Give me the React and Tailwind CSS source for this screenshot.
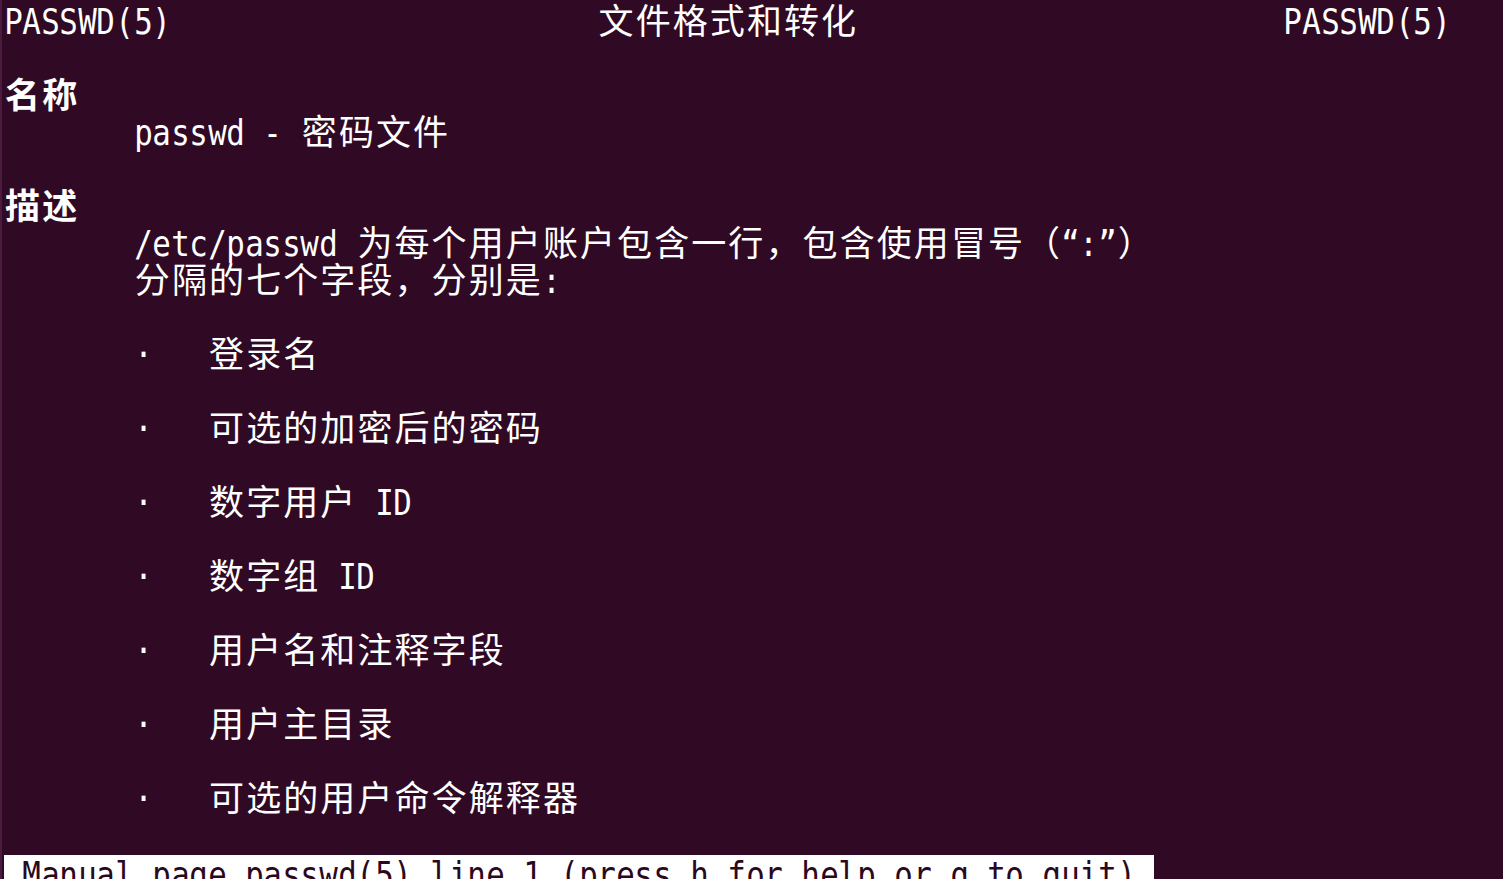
const LATIN_FONT = "font-['DejaVu_Sans_Mono',monospace]"
const CJK_FONT = "font-['Noto_Sans_CJK_SC',sans-serif]"

const isWide = (ch) => {
  const c = ch.codePointAt(0)
  return (c >= 0x2e80 && c <= 0x9fff) || (c >= 0x3000 && c <= 0x303f) || (c >= 0xff00 && c <= 0xff60)
}

const pad = (n) => ' '.repeat(n)

// one entry per terminal row, 37px each, ~18.55px per cell
const LINES = [
  { text: 'PASSWD(5)' + pad(23) + '文件格式和转化' + pad(23) + 'PASSWD(5)' },
  { text: '' },
  { text: '名称', bold: true },
  { text: pad(7) + 'passwd - 密码文件' },
  { text: '' },
  { text: '描述', bold: true },
  { text: pad(7) + '/etc/passwd 为每个用户账户包含一行，包含使用冒号（“:”）' },
  { text: pad(7) + '分隔的七个字段，分别是:' },
  { text: '' },
  { text: pad(7) + '·   登录名' },
  { text: '' },
  { text: pad(7) + '·   可选的加密后的密码' },
  { text: '' },
  { text: pad(7) + '·   数字用户 ID' },
  { text: '' },
  { text: pad(7) + '·   数字组 ID' },
  { text: '' },
  { text: pad(7) + '·   用户名和注释字段' },
  { text: '' },
  { text: pad(7) + '·   用户主目录' },
  { text: '' },
  { text: pad(7) + '·   可选的用户命令解释器' },
  { text: '' },
]

const STATUS = ' Manual page passwd(5) line 1 (press h for help or q to quit) '

function Cell({ ch, bold }) {
  if (isWide(ch)) {
    return (
      <span className={`inline-flex w-[37.1px] shrink-0 justify-center text-[35px] leading-[37px] ${CJK_FONT} ${bold ? 'font-bold' : 'font-normal'}`}>
        {ch}
      </span>
    )
  }
  if (ch === ' ') return <span className="inline-block w-[18.55px] shrink-0" />
  return (
    <span className={`inline-flex w-[18.55px] shrink-0 justify-center text-[35px] leading-[37px] ${LATIN_FONT}`}>
      <span className="inline-block scale-x-[0.88]">{ch}</span>
    </span>
  )
}

function Line({ text, bold }) {
  return (
    <div className="flex h-[37px] items-baseline whitespace-pre">
      {Array.from(text).map((ch, i) => (
        <Cell key={i} ch={ch} bold={bold} />
      ))}
    </div>
  )
}

export default function App() {
  return (
    <div className="h-[879px] w-full overflow-hidden border-l-2 border-[#4b1b3f] bg-[#300a24] pl-[2px] text-white">
      {LINES.map((line, i) => (
        <Line key={i} text={line.text} bold={line.bold} />
      ))}
      <div className="mt-[4px] flex h-[37px] items-start">
        <div className="flex h-[37px] items-baseline bg-white pt-[2px] text-[#2a0820]">
          {Array.from(STATUS).map((ch, i) => (
            <Cell key={i} ch={ch} />
          ))}
        </div>
      </div>
    </div>
  )
}
